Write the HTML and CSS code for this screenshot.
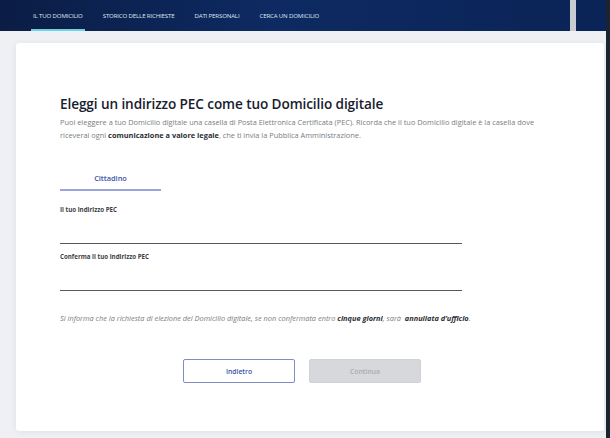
FILE: index.html
```html
<!DOCTYPE html>
<html lang="it">
<head>
  <meta charset="utf-8">
  <title>Domicilio digitale</title>
  <link rel="stylesheet" href="styles.css">
</head>
<body>
  <header class="topbar">
    <nav class="nav">
      <a class="nav-item active">IL TUO DOMICILIO</a>
      <a class="nav-item">STORICO DELLE RICHIESTE</a>
      <a class="nav-item">DATI PERSONALI</a>
      <a class="nav-item">CERCA UN DOMICILIO</a>
    </nav>
    <div class="scroll"></div>
  </header>

  <main class="page">
    <section class="card">
      <h1>Eleggi un indirizzo PEC come tuo Domicilio digitale</h1>
      <p class="intro">Puoi eleggere a tuo Domicilio digitale una casella di Posta Elettronica Certificata (PEC). Ricorda che il tuo Domicilio digitale è la casella dove riceverai ogni <b>comunicazione a valore legale</b>, che ti invia la Pubblica Amministrazione.</p>

      <div class="tabs">
        <span class="tab">Cittadino</span>
      </div>

      <label class="field">
        <span>Il tuo indirizzo PEC</span>
        <input type="text">
      </label>
      <label class="field">
        <span>Conferma il tuo indirizzo PEC</span>
        <input type="text">
      </label>

      <p class="note">Si informa che la richiesta di elezione del Domicilio digitale, se non confermata entro <b>cinque giorni</b>, sarà &nbsp;<b>annullata d’ufficio</b>.</p>

      <div class="actions">
        <button class="btn btn-outline">Indietro</button>
        <button class="btn btn-disabled" disabled>Continua</button>
      </div>
    </section>
  </main>
</body>
</html>
```

FILE: styles.css
```css
*, *::before, *::after { box-sizing: border-box }

body {
  margin: 0;
  font-family: "Open Sans", "Liberation Sans", sans-serif;
  background: #eef0f4;
  height: 438px;
  overflow: hidden;
  border-right: 4px solid #1c2434;
}

/*///////////// Header */

.topbar {
  height: 31px;
  display: flex;
  background: linear-gradient(90deg, #0b1d45 0%, #0d2a62 45%, #0b2457 100%);
}

.nav {
  display: flex;
  gap: 16px;
  padding-left: 31px;
  flex: 1;
}

.nav-item {
  color: #dfe6f2;
  font-size: 6.1px;
  letter-spacing: -0.15px;
  line-height: 31px;
  padding: 0 2px;
  position: relative;
  white-space: nowrap;
}

.nav-item.active::after {
  content: '';
  position: absolute;
  left: 0;
  right: 0;
  bottom: 0;
  height: 2px;
  background: #6fd3e6;
}

.scroll {
  width: 6px;
  margin-right: 30px;
  background: #c8ccd2;
}

/*///////////// Card */

.page {
  padding: 12px 2px 0 16px;
}

.card {
  background: #fff;
  border-radius: 3px;
  box-shadow: 0 1px 6px rgba(30, 50, 90, 0.08);
  height: 388px;
  padding: 51px 60px 0 44px;
}

h1 {
  margin: 0;
  font-size: 13.6px;
  font-weight: 600;
  color: #17202e;
  letter-spacing: -0.1px;
}

.intro {
  margin: 3px 0 0;
  font-size: 7.4px;
  line-height: 13px;
  color: #7a7d82;
}

.intro b { color: #2b2f36; font-weight: 700; }

.tabs {
  margin-top: 22px;
}

.tab {
  display: inline-block;
  width: 101px;
  text-align: center;
  font-size: 7.4px;
  font-weight: 600;
  color: #3a52a8;
  padding-bottom: 6px;
  border-bottom: 2px solid #9aa5dc;
}

.field {
  display: block;
  margin-top: 14px;
  width: 402px;
}

.field span {
  display: block;
  font-size: 6.2px;
  font-weight: 700;
  color: #3a3e45;
}

.field input {
  display: block;
  width: 100%;
  height: 30px;
  border: none;
  border-bottom: 1px solid #555a60;
  outline: none;
  font: inherit;
}

.field + .field { margin-top: 8px; }

.note {
  margin: 22px 0 0;
  font-size: 7.4px;
  font-style: italic;
  color: #7a7d82;
}

.note b { color: #2b2f36; }

.actions {
  display: flex;
  justify-content: center;
  gap: 14px;
  margin-top: 36px;
}

.btn {
  width: 112px;
  height: 24px;
  font: inherit;
  font-size: 6.8px;
  font-weight: 600;
  border-radius: 2px;
}

.btn-outline {
  background: #fff;
  border: 1px solid #7d8ec4;
  color: #3a52a8;
}

.btn-disabled {
  background: #d6d8dc;
  border: 1px solid #cfd2d6;
  color: #a9acb1;
}
```
